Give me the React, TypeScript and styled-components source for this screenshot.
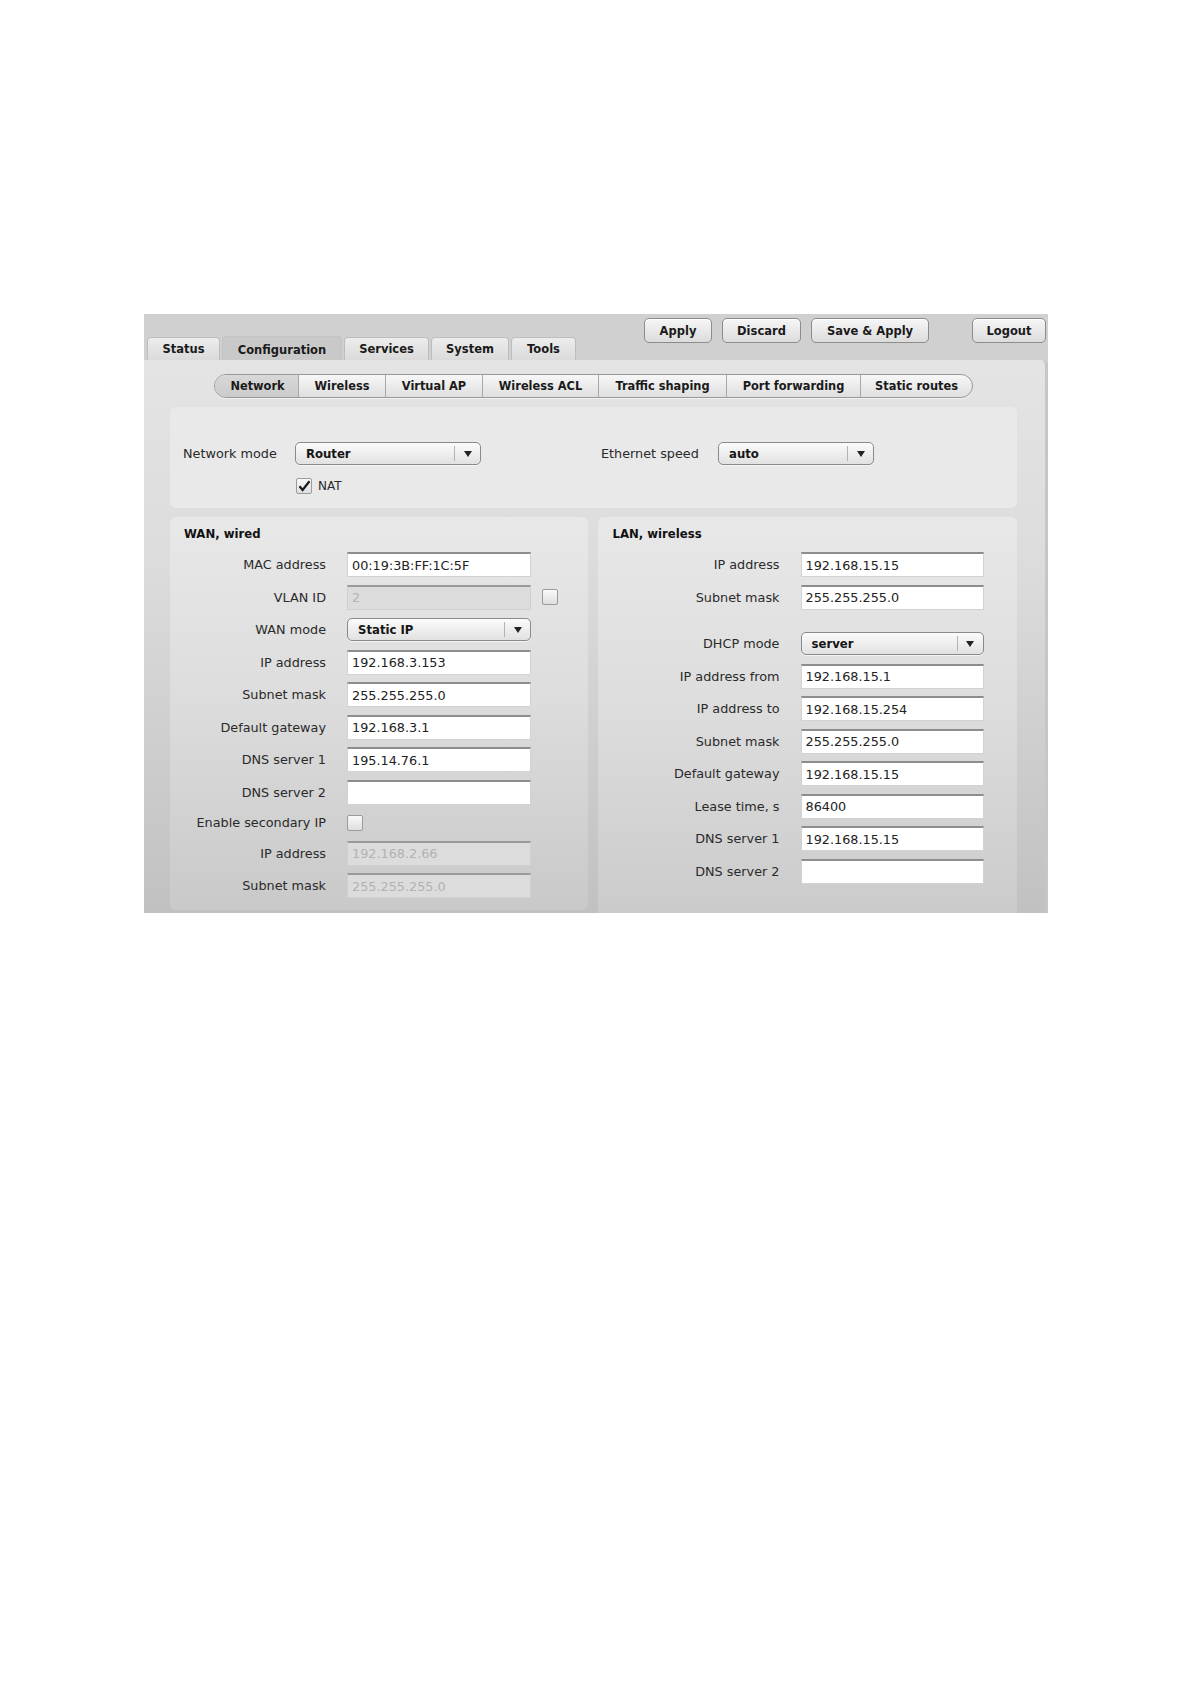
import React from 'react'
import styled, { createGlobalStyle } from 'styled-components'

const GlobalStyle = createGlobalStyle`
  html,
  body {
    margin: 0;
    padding: 0;
    background: #fff;
  }

  body {
    font-family: 'DejaVu Sans', Verdana, sans-serif;
    color: #1e1e1e;
  }
`

const Page = styled.div`
  width: 1190px;
  height: 1684px;
  padding: 314px 0 0 144px;
  box-sizing: border-box;
`

const Frame = styled.div`
  width: 904px;
  height: 599px;
  overflow: hidden;
  display: flex;
  flex-direction: column;
  background: linear-gradient(#d0d0d0, #d6d6d6);
`

const Header = styled.div`
  height: 46px;
  flex-shrink: 0;
  display: flex;
  justify-content: space-between;
`

const Tabs = styled.div`
  display: flex;
  align-items: flex-end;
  gap: 2px;
  padding-left: 3px;
`

const Tab = styled.div<{ $w: number; $active?: boolean }>`
  width: ${({ $w }) => $w}px;
  height: ${({ $active }) => ($active ? 24 : 23)}px;
  box-sizing: border-box;
  display: flex;
  align-items: center;
  justify-content: center;
  padding-top: ${({ $active }) => ($active ? 3 : 0)}px;
  border-radius: 4px 4px 0 0;
  border: 1px solid ${({ $active }) => ($active ? '#c4c4c4' : '#bdbdbd')};
  border-bottom: none;
  background: ${({ $active }) =>
    $active ? '#c9c9c9' : 'linear-gradient(#ededed, #dadada)'};
  font-size: 11.5px;
  font-weight: 700;
  color: #1a1a1a;
`

const Actions = styled.div`
  display: flex;
  align-items: flex-start;
  gap: 10px;
  padding: 4px 2px 0 0;
`

const Button = styled.div<{ $w: number; $push?: number }>`
  width: ${({ $w }) => $w}px;
  height: 25px;
  box-sizing: border-box;
  margin-left: ${({ $push }) => $push ?? 0}px;
  display: flex;
  align-items: center;
  justify-content: center;
  border: 1px solid #8c8c8c;
  border-radius: 5px;
  background: linear-gradient(#f6f6f6, #dcdcdc);
  box-shadow: inset 0 1px 0 #fff;
  font-size: 11.5px;
  font-weight: 700;
  color: #1a1a1a;
`

const Content = styled.div`
  flex: 1;
  display: flex;
  flex-direction: column;
  padding: 14px 0 0 26px;
  border-radius: 0 6px 0 0;
  border-right: 3px solid #c6c6c6;
  background: linear-gradient(#e4e4e4 0%, #dcdcdc 35%, #bfbfbf 100%);
`

const Inner = styled.div`
  width: 847px;
  display: flex;
  flex-direction: column;
`

const SubTabs = styled.div`
  align-self: center;
  display: flex;
  height: 24px;
  box-sizing: border-box;
  border: 1px solid #989898;
  border-radius: 12px;
  overflow: hidden;
  background: linear-gradient(#f7f7f7, #dfdfdf);
  box-shadow: 0 1px 0 #f2f2f2;
`

const SubTab = styled.div<{ $w: number; $active?: boolean }>`
  width: ${({ $w }) => $w}px;
  flex-shrink: 0;
  display: flex;
  align-items: center;
  justify-content: center;
  border-left: 1px solid #a8a8a8;
  background: ${({ $active }) => ($active ? 'linear-gradient(#d8d8d8, #cbcbcb)' : 'transparent')};
  font-size: 11.4px;
  font-weight: 700;
  color: #1a1a1a;

  &:first-child {
    border-left: none;
    padding-left: 2px;
  }
`

const TopBox = styled.div`
  margin-top: 9px;
  height: 101px;
  box-sizing: border-box;
  padding: 35px 0 0 13px;
  border-radius: 6px;
  background: #e9e9e9;
  display: grid;
  grid-template-columns: 418px 1fr;
`

const FieldGroup = styled.div<{ $label: number }>`
  display: grid;
  grid-template-columns: ${({ $label }) => $label}px auto;
  grid-auto-rows: min-content;
  row-gap: 13px;
  align-items: center;
  justify-items: start;
`

const PlainLabel = styled.span`
  font-size: 12.8px;
  color: #2a2a2a;
`

const CheckRow = styled.label`
  grid-column: 2;
  display: flex;
  align-items: center;
  gap: 6px;
  padding-left: 1px;
  font-size: 12px;
  color: #2a2a2a;
`

const Boxes = styled.div`
  margin-top: 9px;
  display: flex;
  gap: 10px;
  align-items: flex-start;
`

const Box = styled.div<{ $w: number; $h: number; $pad: number }>`
  width: ${({ $w }) => $w}px;
  height: ${({ $h }) => $h}px;
  box-sizing: border-box;
  padding: 10px 0 0 ${({ $pad }) => $pad}px;
  border-radius: 6px;
  background: linear-gradient(#e8e8e8 0%, #dddddd 45%, #c9c9c9 100%);
  display: flex;
  flex-direction: column;
`

const BoxTitle = styled.div`
  font-size: 11.7px;
  font-weight: 700;
  line-height: 14px;
  color: #111;
  margin-bottom: 11px;
`

const Rows = styled.div<{ $gap: number }>`
  display: flex;
  flex-direction: column;
  gap: ${({ $gap }) => $gap}px;
`

const Row = styled.div<{ $label: number; $input: number; $h?: number }>`
  display: grid;
  grid-template-columns: ${({ $label }) => $label}px ${({ $input }) => $input}px auto;
  column-gap: 21px;
  height: ${({ $h }) => $h ?? 25}px;
  align-items: center;
`

const Spacer = styled.div<{ $h: number }>`
  height: ${({ $h }) => $h}px;
`

const RowLabel = styled.span`
  text-align: right;
  font-size: 12.8px;
  color: #2a2a2a;
  white-space: nowrap;
`

const Input = styled.input`
  width: 100%;
  height: 25px;
  box-sizing: border-box;
  margin: 0;
  padding: 0 0 0 4px;
  border: 1px solid #d2d2d2;
  border-top: 2px solid #8d8d8d;
  border-radius: 0;
  background: #fff;
  font-family: 'DejaVu Sans', Verdana, sans-serif;
  font-size: 12.8px;
  color: #222;
  outline: none;

  &:disabled {
    background: #dcdcdc;
    border-color: #d0d0d0;
    border-top-color: #9a9a9a;
    color: #b2b2b2;
  }
`

const Select = styled.div<{ $w?: number }>`
  width: ${({ $w }) => ($w ? `${$w}px` : '100%')};
  height: 23px;
  box-sizing: border-box;
  display: flex;
  align-items: center;
  border: 1px solid #8a8a8a;
  border-radius: 5px;
  background: linear-gradient(#fbfbfb, #e1e1e1);
  box-shadow: 0 1px 0 #f4f4f4;
`

const SelectValue = styled.span`
  flex: 1;
  padding-left: 10px;
  font-size: 11.7px;
  font-weight: 700;
  color: #151515;
`

const SelectArrow = styled.span`
  width: 25px;
  height: 15px;
  display: flex;
  align-items: center;
  justify-content: center;
  border-left: 1px solid #b3b3b3;

  &::after {
    content: '';
    border-left: 4px solid transparent;
    border-right: 4px solid transparent;
    border-top: 6px solid #222;
  }
`

const Check = styled.span<{ $gap?: number }>`
  width: 16px;
  height: 16px;
  box-sizing: border-box;
  margin-left: ${({ $gap }) => $gap ?? 0}px;
  display: inline-flex;
  align-items: center;
  justify-content: center;
  border: 1px solid #9b9b9b;
  border-radius: 2px;
  background: linear-gradient(#fafafa, #dedede);
`

const Dropdown = ({ value, w }: { value: string; w?: number }) => (
  <Select $w={w}>
    <SelectValue>{value}</SelectValue>
    <SelectArrow />
  </Select>
)

const CheckMark = () => (
  <svg width="13" height="12" viewBox="0 0 13 12">
    <path d="M1.5 6.2 L4.6 10 L11.5 1.2" fill="none" stroke="#1b1b1b" strokeWidth="2.2" />
  </svg>
)

type Field =
  | { label: string; value: string; disabled?: boolean; check?: boolean }
  | { label: string; select: string }
  | { label: string; checkbox: true }
  | { spacer: number }

const wan: Field[] = [
  { label: 'MAC address', value: '00:19:3B:FF:1C:5F' },
  { label: 'VLAN ID', value: '2', disabled: true, check: true },
  { label: 'WAN mode', select: 'Static IP' },
  { label: 'IP address', value: '192.168.3.153' },
  { label: 'Subnet mask', value: '255.255.255.0' },
  { label: 'Default gateway', value: '192.168.3.1' },
  { label: 'DNS server 1', value: '195.14.76.1' },
  { label: 'DNS server 2', value: '' },
  { label: 'Enable secondary IP', checkbox: true },
  { label: 'IP address', value: '192.168.2.66', disabled: true },
  { label: 'Subnet mask', value: '255.255.255.0', disabled: true },
]

const lan: Field[] = [
  { label: 'IP address', value: '192.168.15.15' },
  { label: 'Subnet mask', value: '255.255.255.0' },
  { spacer: 14 },
  { label: 'DHCP mode', select: 'server' },
  { label: 'IP address from', value: '192.168.15.1' },
  { label: 'IP address to', value: '192.168.15.254' },
  { label: 'Subnet mask', value: '255.255.255.0' },
  { label: 'Default gateway', value: '192.168.15.15' },
  { label: 'Lease time, s', value: '86400' },
  { label: 'DNS server 1', value: '192.168.15.15' },
  { label: 'DNS server 2', value: '' },
]

const FieldRows = ({ fields, label, input }: { fields: Field[]; label: number; input: number }) => (
  <Rows $gap={7.5}>
    {fields.map((f, i) => {
      if ('spacer' in f) return <Spacer key={i} $h={f.spacer - 7.5} />
      if ('checkbox' in f)
        return (
          <Row key={i} $label={label} $input={input} $h={21}>
            <RowLabel>{f.label}</RowLabel>
            <Check />
          </Row>
        )
      if ('select' in f)
        return (
          <Row key={i} $label={label} $input={input}>
            <RowLabel>{f.label}</RowLabel>
            <Dropdown value={f.select} />
          </Row>
        )
      return (
        <Row key={i} $label={label} $input={input}>
          <RowLabel>{f.label}</RowLabel>
          <Input readOnly disabled={f.disabled} value={f.value} />
          {f.check && <Check $gap={-10} />}
        </Row>
      )
    })}
  </Rows>
)

const tabs = [
  { name: 'Status', w: 73 },
  { name: 'Configuration', w: 120, active: true },
  { name: 'Services', w: 85 },
  { name: 'System', w: 78 },
  { name: 'Tools', w: 65 },
]

const subTabs = [
  { name: 'Network', w: 81, active: true },
  { name: 'Wireless', w: 86 },
  { name: 'Virtual AP', w: 96 },
  { name: 'Wireless ACL', w: 115 },
  { name: 'Traffic shaping', w: 127 },
  { name: 'Port forwarding', w: 133 },
  { name: 'Static routes', w: 111 },
]

const App = () => {
  return (
    <Page>
      <GlobalStyle />
      <Frame>
        <Header>
          <Tabs>
            {tabs.map((t) => (
              <Tab key={t.name} $w={t.w} $active={t.active}>
                {t.name}
              </Tab>
            ))}
          </Tabs>
          <Actions>
            <Button $w={68}>Apply</Button>
            <Button $w={79}>Discard</Button>
            <Button $w={118}>Save &amp; Apply</Button>
            <Button $w={74} $push={33}>
              Logout
            </Button>
          </Actions>
        </Header>
        <Content>
          <Inner>
            <SubTabs>
              {subTabs.map((t) => (
                <SubTab key={t.name} $w={t.w} $active={t.active}>
                  {t.name}
                </SubTab>
              ))}
            </SubTabs>

            <TopBox>
              <FieldGroup $label={112}>
                <PlainLabel>Network mode</PlainLabel>
                <Dropdown value="Router" w={186} />
                <CheckRow>
                  <Check>
                    <CheckMark />
                  </Check>
                  NAT
                </CheckRow>
              </FieldGroup>
              <FieldGroup $label={117}>
                <PlainLabel>Ethernet speed</PlainLabel>
                <Dropdown value="auto" w={156} />
              </FieldGroup>
            </TopBox>

            <Boxes>
              <Box $w={418} $h={393} $pad={14}>
                <BoxTitle>WAN, wired</BoxTitle>
                <FieldRows fields={wan} label={142} input={184} />
              </Box>
              <Box $w={420} $h={420} $pad={15}>
                <BoxTitle>LAN, wireless</BoxTitle>
                <FieldRows fields={lan} label={167} input={183} />
              </Box>
            </Boxes>
          </Inner>
        </Content>
      </Frame>
    </Page>
  )
}

export default App
